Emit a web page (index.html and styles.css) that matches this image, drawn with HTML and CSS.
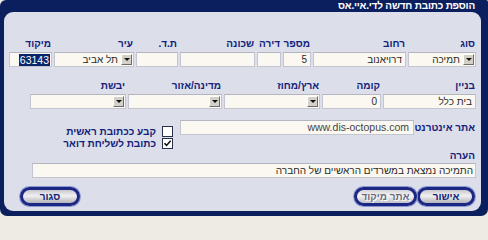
FILE: index.html
```html
<!DOCTYPE html>
<html lang="he">
<head>
<meta charset="utf-8">
<title>הוספת כתובת חדשה</title>
<link rel="stylesheet" href="styles.css">
</head>
<body>
<div class="frame">
  <div class="title">הוספת כתובת חדשה לדי.איי.אס</div>
  <div class="panel">
    <div class="row r1">
      <div class="fld w68"><div class="lbl">סוג</div><div class="inp sel"><span class="arr"></span><span class="v">תמיכה</span></div></div>
      <div class="fld w93"><div class="lbl">רחוב</div><div class="inp">דרויאנוב</div></div>
      <div class="fld w28"><div class="lbl">מספר</div><div class="inp">5</div></div>
      <div class="fld w24"><div class="lbl">דירה</div><div class="inp"></div></div>
      <div class="fld w75"><div class="lbl">שכונה</div><div class="inp"></div></div>
      <div class="fld w42"><div class="lbl">ת.ד.</div><div class="inp"></div></div>
      <div class="fld w80"><div class="lbl">עיר</div><div class="inp sel"><span class="arr"></span><span class="v">תל אביב</span></div></div>
      <div class="fld w43"><div class="lbl">מיקוד</div><div class="inp zip"><span class="hl">63143</span></div></div>
    </div>
    <div class="row r2">
      <div class="fld w93"><div class="lbl">בניין</div><div class="inp">בית כלל</div></div>
      <div class="fld w59"><div class="lbl">קומה</div><div class="inp">0</div></div>
      <div class="fld w96"><div class="lbl">ארץ/מחוז</div><div class="inp sel"><span class="arr"></span></div></div>
      <div class="fld w94"><div class="lbl">מדינה/אזור</div><div class="inp sel"><span class="arr"></span></div></div>
      <div class="fld w96"><div class="lbl">יבשת</div><div class="inp sel"><span class="arr"></span></div></div>
    </div>
    <div class="r3">
      <div class="lbl wl">אתר אינטרנט</div>
      <div class="inp web">www.dis-octopus.com</div>
      <div class="cbs">
        <div class="cb"><span class="box"></span><span class="cbt">קבע ככתובת ראשית</span></div>
        <div class="cb"><span class="box"><svg width="9" height="9" viewBox="0 0 9 9"><path d="M1.5 4.2 L3.6 6.4 L7.6 1.8" fill="none" stroke="#111" stroke-width="1.6"/></svg></span><span class="cbt">כתובת לשליחת דואר</span></div>
      </div>
    </div>
    <div class="r4">
      <div class="lbl">הערה</div>
      <div class="inp note">התמיכה נמצאת במשרדים הראשיים של החברה</div>
    </div>
    <div class="btns">
      <div class="grp">
        <div class="btn b1">אישור</div>
        <div class="btn b2 dis">אתר מיקוד</div>
      </div>
      <div class="btn b3">סגור</div>
    </div>
  </div>
</div>
</body>
</html>
```
FILE: styles.css
```css
* { box-sizing: border-box; margin: 0; padding: 0; }
html, body { width: 488px; height: 219px; overflow: hidden; background: #eeebe3; }
body { font-family: "Liberation Sans", "DejaVu Sans", Arial, sans-serif; }

.frame {
  width: 488px; height: 216px;
  background: #0b1f5f;
  border-radius: 6px 2px 7px 7px;
  padding: 0 7px 5px 4px;
  display: flex; flex-direction: column;
}
.title {
  height: 12px; line-height: 11px;
  color: #fff; font-weight: bold; font-size: 10px;
  letter-spacing: -0.2px;
  direction: rtl; text-align: right;
  padding-right: 6px; white-space: nowrap;
}
.panel {
  flex: 1;
  background: #dcdfea;
  border-radius: 9px;
  padding: 26px 5px 0 5px;
  direction: rtl;
  display: flex; flex-direction: column;
}
.row { display: flex; gap: 2px; }
.r2 { margin-top: 13px; }
.fld { display: flex; flex-direction: column; }
.w24 { width: 24px; } .w28 { width: 28px; } .w42 { width: 42px; } .w43 { width: 43px; }
.w59 { width: 59px; } .w68 { width: 68px; } .w75 { width: 75px; } .w80 { width: 80px; }
.w93 { width: 93px; } .w94 { width: 94px; } .w96 { width: 96px; }

.lbl {
  height: 12px; line-height: 12px;
  font-size: 10px; font-weight: bold; color: #13227a;
  padding-right: 1px; margin-bottom: 2px; white-space: nowrap;
}
.inp {
  height: 15px;
  background: #fbf8f1;
  border: 1px solid #c3c6d0;
  border-top-color: #b3b6c0;
  font-size: 10px; line-height: 13px; color: #2a2a2a;
  padding: 0 3px;
  white-space: nowrap; overflow: hidden;
  display: flex; align-items: center;
}
.sel { padding: 0 1px; gap: 3px; }
.arr {
  flex: none;
  width: 11px; height: 11px;
  background: #d4d0c8;
  border: 1px solid; border-color: #fff #6d6d6d #6d6d6d #fff;
  position: relative;
}
.arr::after {
  content: ""; position: absolute; left: 2px; top: 3px;
  border-left: 3px solid transparent; border-right: 3px solid transparent;
  border-top: 3px solid #111;
}
.zip { padding: 0 1px; }
.hl { background: #0a246a; color: #fff; font-size: 10.5px; line-height: 12px; padding: 0 1px; }

.r3 { display: flex; align-items: flex-start; margin-top: 11px; }
.wl { width: 62px; height: 15px; line-height: 15px; margin: 0; }
.web { width: 234px; font-size: 10.5px; color: #444; padding: 0 4px; }
.cbs { margin-right: 7px; margin-top: 5px; display: flex; flex-direction: column; }
.cb { height: 12px; display: flex; align-items: center; gap: 6px; }
.box {
  width: 11px; height: 11px; background: #fff;
  border: 1px solid #2a2f4a;
  display: flex; align-items: center; justify-content: center;
}
.cbt { font-size: 10px; font-weight: bold; color: #13227a; white-space: nowrap; }

.r4 { margin-top: 1px; display: flex; flex-direction: column; }
.r4 .lbl { margin-bottom: 1px; }
.note { width: 444px; padding: 0 2px; }

.btns {
  margin-top: 9px;
  display: flex; justify-content: space-between;
  padding: 0 1px 0 11px;
}
.grp { display: flex; gap: 0; }
.btn {
  height: 19px;
  border: 3px solid #1b2785;
  border-radius: 10px;
  background: linear-gradient(#c9c9cd, #f0f0f2 45%, #b3b3b8);
  box-shadow: 0 0 0 1px #8d97cf;
  font-size: 10px; font-weight: bold; color: #13227a;
  display: flex; align-items: center; justify-content: center;
}
.b1 { width: 58px; }
.b2 { width: 63px; }
.b3 { width: 60px; }
.dis { color: #6d6d78; text-shadow: 1px 1px 0 #fff; background: linear-gradient(#d6d6da, #f4f4f6 45%, #c0c0c6); }
```
